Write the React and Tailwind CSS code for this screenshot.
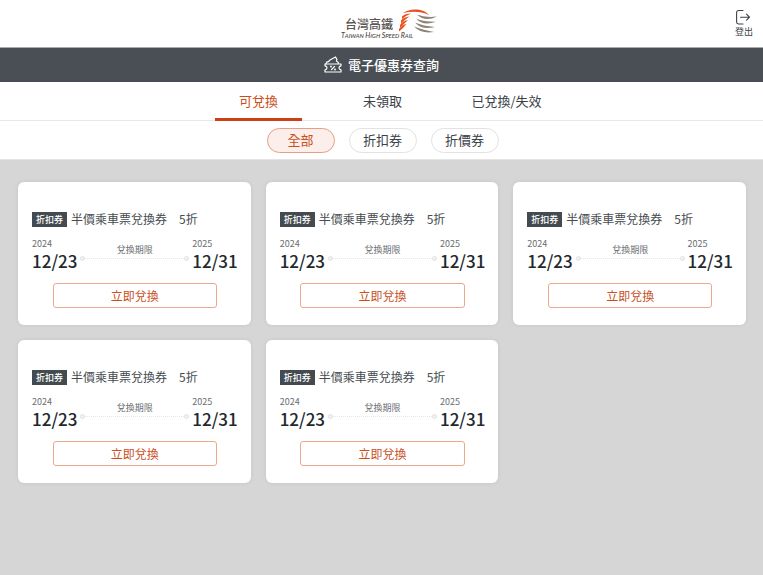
import { useState } from "react";

const TABS = ["可兌換", "未領取", "已兌換/失效"];
const FILTERS = ["全部", "折扣券", "折價券"];

const coupons = [1, 2, 3, 4, 5].map((id) => ({
  id,
  type: "折扣券",
  name: "半價乘車票兌換券",
  discount: "5折",
  start: { year: "2024", day: "12/23" },
  end: { year: "2025", day: "12/31" },
}));

function Logo() {
  return (
    <svg
      viewBox="0 0 112 34"
      className="h-[34px] w-[112px]"
      role="img"
      aria-label="台灣高鐵 Taiwan High Speed Rail"
    >
      <text
        x="19"
        y="22"
        fontSize="12"
        fontWeight="500"
        fill="#5a5552"
        className="font-['Noto_Sans_CJK_TC',sans-serif]"
      >
        台灣高鐵
      </text>
      <text
        x="15"
        y="31"
        fontSize="6"
        fontStyle="italic"
        fontWeight="500"
        fill="#4a4542"
        className="font-[Lato,sans-serif]"
      >
        <tspan fontSize="7">T</tspan>AIWAN <tspan fontSize="7">H</tspan>IGH{" "}
        <tspan fontSize="7">S</tspan>PEED <tspan fontSize="7">R</tspan>AIL
      </text>
      {/* train nose arc */}
      <path d="M77 6C84 1 97 1 103 8C95 4 86 4 77 6Z" fill="#e8501e" />
      <g fill="#e8501e">
        <path d="M76 9.5Q79 6.5 85 6.5Q80 8.5 76 12Z" />
        <path d="M75 13.5Q78 10 83.5 9.6Q79 12.5 75 16.5Z" />
        <path d="M74 18Q77 13.5 82 13Q78.500 16.5 74 20.5Z" />
        <path d="M73 22Q76 17.5 80.5 16.7Q77.5 21 73 24.5Z" />
      </g>
      <g fill="#8f8375">
        <path d="M91 7.5Q99 11 111 9.5Q99 15.5 91 7.5Z" />
        <path d="M90 11.5Q98 15 110 14.8Q97 19.5 90 11.5Z" />
        <path d="M89 15.5Q97 19 109 20Q96 23.500 89 15.5Z" />
        <path d="M88 19.5Q96 22.5 108 25Q95 27 88 19.5Z" />
      </g>
    </svg>
  );
}

function LogoutIcon() {
  return (
    <svg
      viewBox="0 0 16 16"
      className="size-4"
      fill="none"
      stroke="#3c4248"
      strokeWidth="1.1"
      strokeLinecap="round"
      strokeLinejoin="round"
      aria-hidden="true"
    >
      <path d="M7 1.5H2.5A2 2 0 0 0 .6 3.5V13A2 2 0 0 0 2.5 15H7" />
      <path d="M4.5 8.2H13.5M10.5 5.2L13.5 8.2L10.5 11.2" />
    </svg>
  );
}

function TicketIcon() {
  return (
    <svg
      viewBox="0 0 18 18"
      className="size-[18px]"
      fill="none"
      stroke="#fff"
      strokeWidth="1.2"
      strokeLinejoin="round"
      aria-hidden="true"
    >
      <path d="M1 8H17V9.8Q15 10 15 11.8T17 13.8V16H1V13.8Q3 13.6 3 11.8T1 9.8Z" />
      <path d="M1.8 8L3 5.8Q4.8 6.3 5.5 4.3L11.5 1L13 3.6Q11.5 5 14 6L14.5 8" />
      <path d="M10.8 10.2L7.2 14" />
      <circle cx="7" cy="10.6" r=".4" />
      <circle cx="11" cy="13.6" r=".4" />
    </svg>
  );
}

function CouponDate({ date }) {
  return (
    <div>
      <p className="text-[9px] leading-3 text-[#6a6e71]">{date.year}</p>
      <p className="text-[17px] leading-[22px] font-medium text-[#22282d]">
        {date.day}
      </p>
    </div>
  );
}

function CouponCard({ coupon }) {
  return (
    <article className="rounded-md bg-white pt-[28px] pr-[13px] pb-[17px] pl-[14px] shadow-[0_0_4px_rgba(0,0,0,0.08)]">
      <h2 className="flex items-center gap-1 text-[12px] leading-[18px] text-[#454b50]">
        <span className="bg-[#444b50] px-1 text-[9px] leading-[15px] font-medium text-white">
          {coupon.type}
        </span>
        <span>{coupon.name}</span>
        <span className="ml-2">{coupon.discount}</span>
      </h2>
      <div className="mt-[10px] flex">
        <CouponDate date={coupon.start} />
        <div className="mx-[3px] flex-1 pt-[5px] text-center">
          <p className="text-[9px] leading-[13px] text-[#6a6e71]">兌換期限</p>
          <div className="flex items-center">
            <span className="size-[5px] rounded-full border border-[#e2e2e2] bg-[#f1f1f1]" />
            <span className="flex-1 border-t border-dotted border-[#e6e6e6]" />
            <span className="size-[5px] rounded-full border border-[#e2e2e2] bg-[#f1f1f1]" />
          </div>
        </div>
        <CouponDate date={coupon.end} />
      </div>
      <button
        type="button"
        className="mx-auto mt-[11px] block w-4/5 rounded-[3px] border border-[#eca88d] text-[12px] leading-[23px] text-[#ca4f1c]"
      >
        立即兌換
      </button>
    </article>
  );
}

export default function App() {
  const [tab, setTab] = useState(TABS[0]);
  const [filter, setFilter] = useState(FILTERS[0]);

  return (
    <div
      lang="zh-Hant"
      className="min-h-screen bg-[#d6d6d6] font-['Noto_Sans_CJK_TC','Noto_Sans',sans-serif] text-[#3c4248]"
    >
      <header className="grid h-12 grid-cols-[1fr_auto_1fr] border-b border-[#a9abad] bg-white">
        <a href="#" className="col-start-2 pt-[7px]">
          <Logo />
        </a>
        <button
          type="button"
          className="mr-[10px] flex flex-col items-center gap-px justify-self-end pt-[9px] text-[9px] leading-3"
        >
          <LogoutIcon />
          登出
        </button>
      </header>

      <div className="flex h-[34px] items-center justify-center gap-[6px] bg-[#494f54] text-white">
        <TicketIcon />
        <h1 className="text-[13px] leading-5 font-medium">電子優惠券查詢</h1>
      </div>

      <nav className="flex justify-center gap-[37px] border-b border-[#e8e8e8] bg-white pl-[2px]">
        {TABS.map((item) => (
          <button
            key={item}
            type="button"
            onClick={() => setTab(item)}
            className={`-mb-px h-[39px] w-[87px] border-b-3 pt-[2px] text-[13px] ${
              tab === item
                ? "border-[#ca4014] text-[#ca4f1c]"
                : "border-transparent"
            }`}
          >
            {item}
          </button>
        ))}
      </nav>

      <div className="flex h-[39px] items-center justify-center gap-[14px] border-b border-[#e4e4e4] bg-white pl-[2px]">
        {FILTERS.map((item) => (
          <button
            key={item}
            type="button"
            onClick={() => setFilter(item)}
            className={`h-[25px] w-[68px] rounded-full border pb-[2px] text-[13px] leading-[21px] ${
              filter === item
                ? "border-[#e5a084] bg-[#fceeea] text-[#ca4f1c]"
                : "border-[#e2e2e2] bg-white"
            }`}
          >
            {item}
          </button>
        ))}
      </div>

      <main className="grid grid-cols-3 gap-[15px] py-[22px] pr-[17px] pl-[18px]">
        {coupons.map((coupon) => (
          <CouponCard key={coupon.id} coupon={coupon} />
        ))}
      </main>
    </div>
  );
}
